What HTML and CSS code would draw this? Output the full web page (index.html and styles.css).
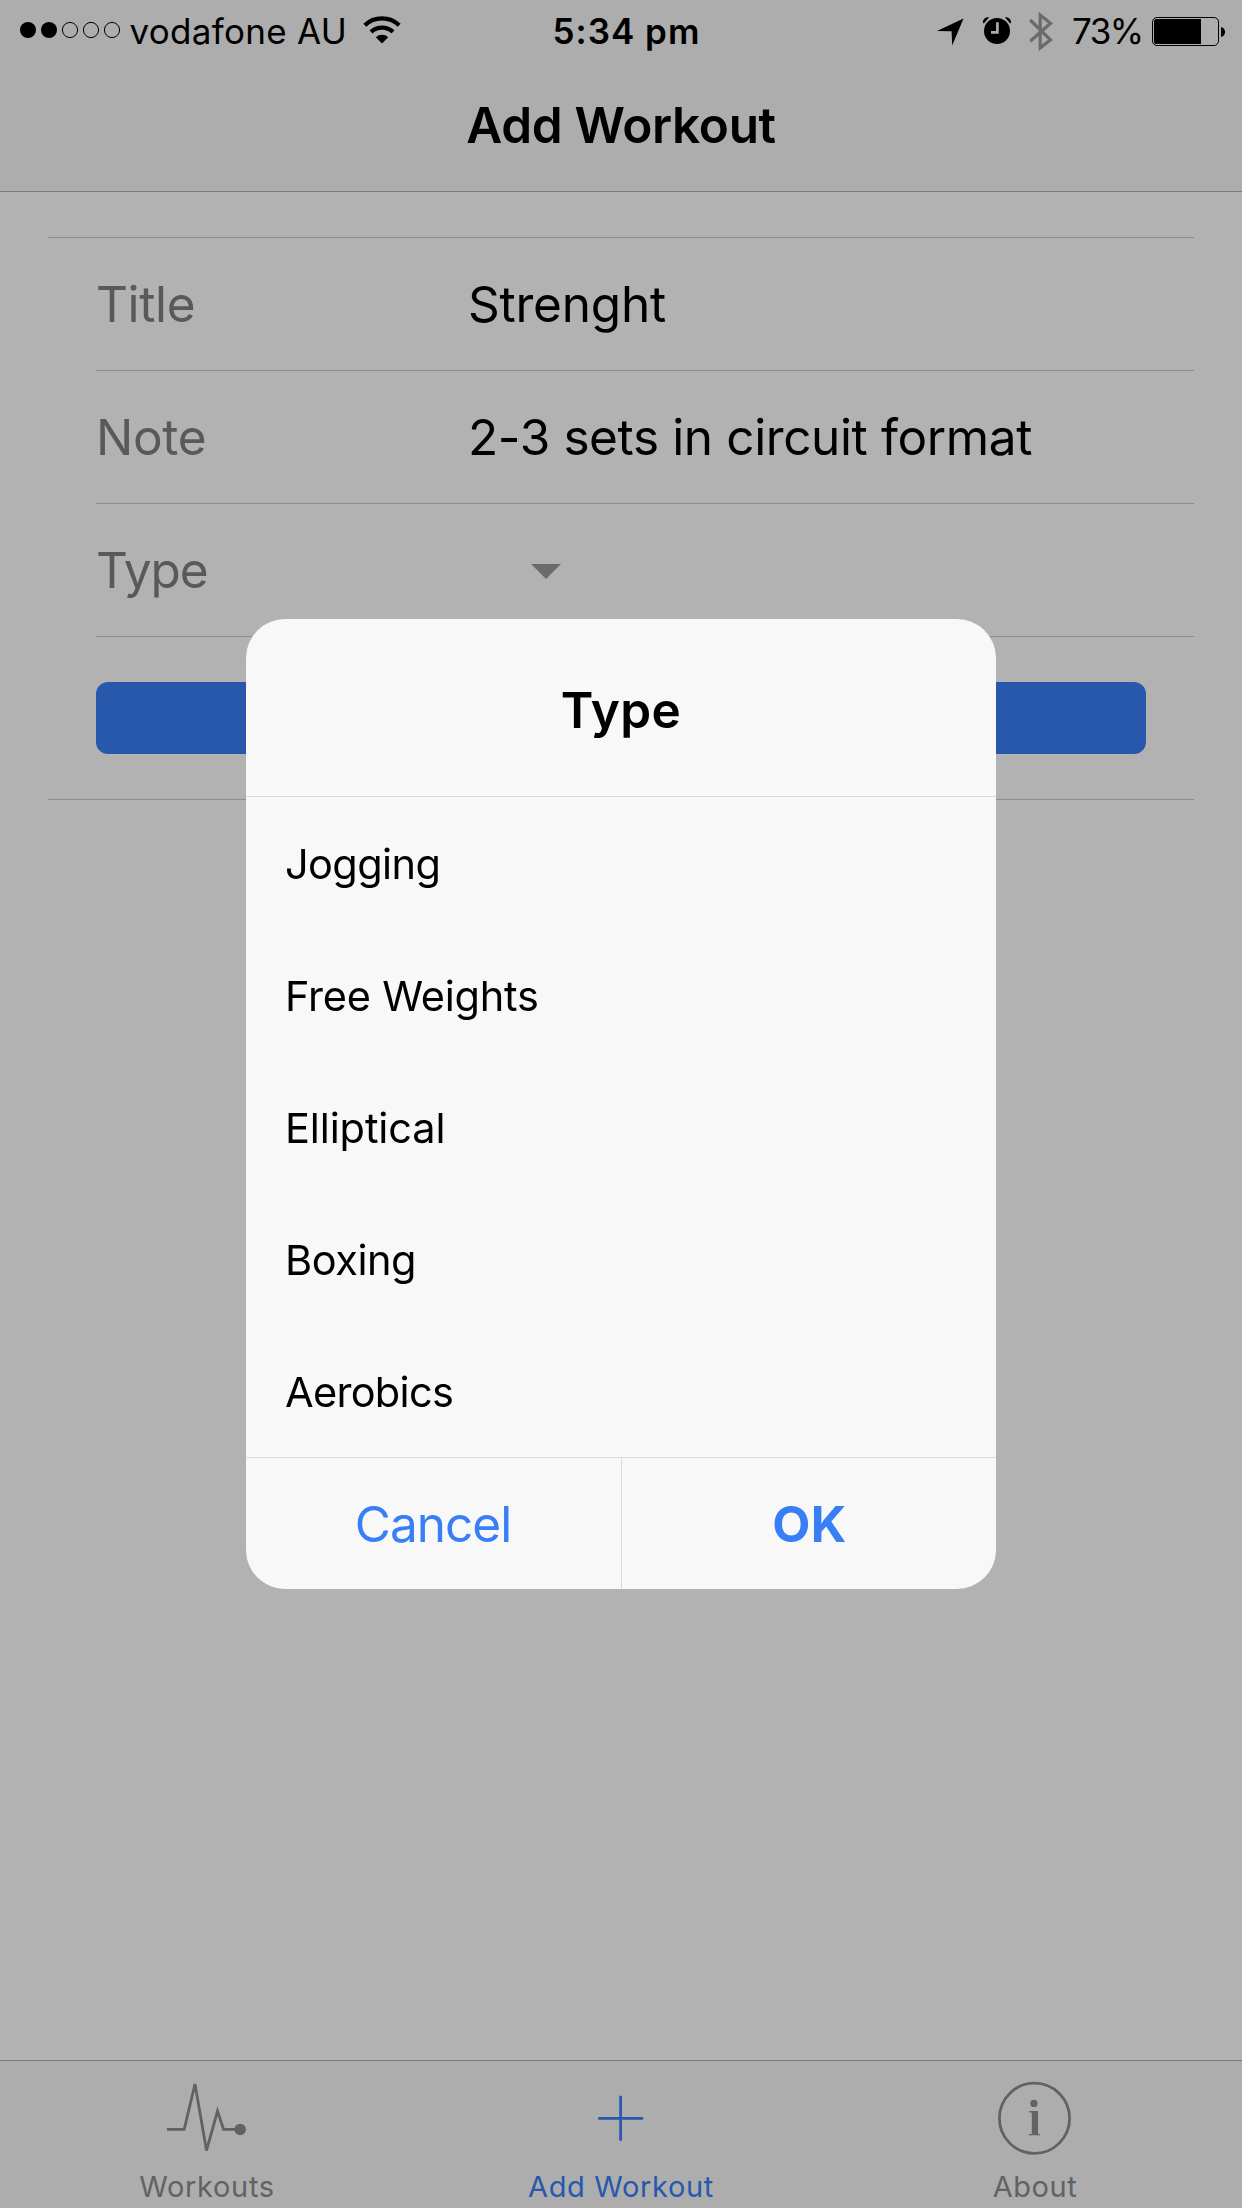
FILE: index.html
```html
<!DOCTYPE html>
<html lang="en">
<head>
<meta charset="utf-8">
<title>Add Workout</title>
<link rel="stylesheet" href="styles.css">
</head>
<body>
<div class="screen">
  <header class="topbar">
    <div class="status">
      <div class="status-left">
        <svg class="signal" width="106" height="20" viewBox="0 0 106 20">
          <circle cx="9" cy="10" r="8"/><circle cx="30" cy="10" r="8"/>
          <g fill="none" stroke="#000" stroke-width="1"><circle cx="51" cy="10" r="7.6"/><circle cx="72" cy="10" r="7.6"/><circle cx="93" cy="10" r="7.6"/></g>
        </svg>
        <span class="carrier">vodafone AU</span>
        <svg class="wifi" width="40" height="30" viewBox="0 0 40 30">
          <g fill="none" stroke="#000" stroke-width="4.3"><path d="M2.8 10.2A25.2 25.2 0 0 1 37.2 10.2"/><path d="M9 16.9A16.2 16.2 0 0 1 31 16.9"/></g>
          <path d="M13.8 22.2A9 9 0 0 1 26.2 22.2L20 28.4Z"/>
        </svg>
      </div>
      <div class="time">5:34 pm</div>
      <div class="status-right">
        <svg width="30" height="30" viewBox="0 0 30 30"><path d="M1 15 27.5 2.5 16.2 29.5 15.6 15.3Z"/></svg>
        <svg class="alarm" width="32" height="30" viewBox="0 0 32 30">
          <circle cx="16" cy="16" r="13"/>
          <path d="M2 7.8C1.6 4.5 4.5 1.8 8 2.4L2.8 8.4ZM30 7.8C30.4 4.5 27.5 1.8 24 2.4L29.2 8.4Z"/>
          <path d="M16.4 7.2V17.3H10" fill="none" stroke="#adadad" stroke-width="2.7"/>
        </svg>
        <svg class="bluetooth" width="30" height="44" viewBox="0 0 30 44"><path d="M3.2 11 23.5 30.8 13.2 39V6L23.5 14.2 3.2 32.2" fill="none" stroke="#6b6b6b" stroke-width="3.2"/></svg>
        <span class="percent">73%</span>
        <svg class="battery" width="76" height="30" viewBox="0 0 76 30">
          <rect x=".5" y="1.5" width="66" height="28" rx="4.5" fill="none" stroke="#000"/>
          <path d="M4.5 3H49V28H4.5A2.5 2.5 0 0 1 2 25.5V5.5A2.5 2.5 0 0 1 4.5 3Z"/>
          <path d="M69 11Q73 12 73 16T69 21Z"/>
        </svg>
      </div>
    </div>
    <h1 class="title">Add Workout</h1>
  </header>

  <main class="content">
    <form class="form">
      <div class="row"><label class="label">Title</label><span class="value strength">Strenght</span></div>
      <div class="row"><label class="label">Note</label><span class="value">2-3 sets in circuit format</span></div>
      <div class="row"><label class="label type">Type</label><span class="value"><i class="caret"></i></span></div>
      <div class="submit"><button class="button" type="button" aria-label="Add"></button></div>
    </form>
  </main>

  <nav class="tabs">
    <a class="tab">
      <svg width="96" height="86" viewBox="0 0 96 86">
        <path d="M8 53.3H25.2L36 8 47.5 74.5 58.5 35 64.5 53.3H81" fill="none" stroke="currentColor" stroke-width="2.8"/>
        <circle cx="81.2" cy="53.4" r="5.7" fill="currentColor"/>
      </svg>
      <span class="tab-label">Workouts</span>
    </a>
    <a class="tab active">
      <svg width="96" height="86" viewBox="0 0 96 86"><path d="M25.2 42.3H70.2M47.6 19.7V64.7" stroke="currentColor" stroke-width="2.7"/></svg>
      <span class="tab-label">Add Workout</span>
    </a>
    <a class="tab">
      <svg width="96" height="86" viewBox="0 0 96 86">
        <circle cx="47.5" cy="42.3" r="35.1" fill="none" stroke="currentColor" stroke-width="2.8"/>
        <circle cx="46.9" cy="27.4" r="3.6" fill="currentColor"/>
        <path d="M42.2 35.7H48.5M42 58.6H53.2" stroke="currentColor" stroke-width="1.4"/>
        <rect x="44.8" y="35" width="6.2" height="24" fill="currentColor"/>
      </svg>
      <span class="tab-label about">About</span>
    </a>
  </nav>
</div>

<div class="overlay">
  <section class="dialog">
    <h2 class="dialog-title">Type</h2>
    <ul class="options">
      <li class="option jogging">Jogging</li>
      <li class="option weights">Free Weights</li>
      <li class="option elliptical">Elliptical</li>
      <li class="option boxing">Boxing</li>
      <li class="option aerobics">Aerobics</li>
    </ul>
    <div class="actions">
      <button class="action cancel" type="button">Cancel</button>
      <button class="action ok" type="button">OK</button>
    </div>
  </section>
</div>
</body>
</html>
```
FILE: styles.css
```css
* { box-sizing: border-box; }
body {
  margin: 0;
  background: #b2b2b2;
  color: #000;
  font-family: Inter, "Liberation Sans", sans-serif;
}
h1, h2, ul { margin: 0; padding: 0; }
svg { display: block; flex: none; }
button { border: 0; padding: 0; background: none; font: inherit; }

.screen {
  display: flex;
  flex-direction: column;
  width: 1242px;
  height: 2208px;
  background: #b2b2b2;
}

/* Status bar and page title */
.topbar {
  height: 192px;
  background: #adadad;
  border-bottom: 1px solid #7b7b7b;
}
.status {
  display: grid;
  grid-template-columns: 533.5px 358.5px 1fr;
  height: 62px;
  padding-left: 19px;
  font-size: 35px;
  line-height: 62px;
  white-space: nowrap;
}
.status-left, .status-right { display: flex; align-items: center; }
.signal { margin-right: 4.5px; margin-top: -2px; }
.carrier { letter-spacing: .3px; }
.wifi { margin-left: 15px; margin-top: -3px; }
.time { font-weight: 600; letter-spacing: 1.01px; }
.status-right { padding-left: 25px; }
.alarm { margin-left: 15px; margin-top: -2px; }
.bluetooth { margin-left: 14px; }
.percent { margin-left: 15px; width: 80px; letter-spacing: -1.5px; }
.title {
  height: 129px;
  font-size: 49.5px;
  font-weight: 600;
  line-height: 126px;
  letter-spacing: -.32px;
  text-align: center;
}

/* Form */
.content { flex: 1; padding: 45px 48px 0; }
.form {
  border-top: 1px solid #8c8c8c;
  border-bottom: 1px solid #8c8c8c;
  padding-left: 48px;
}
.row {
  display: flex;
  height: 133px;
  border-bottom: 1px solid #8c8c8c;
  font-size: 49.5px;
  line-height: 132px;
  white-space: nowrap;
}
.label { width: 372px; color: #595959; letter-spacing: -.35px; }
.label.type { letter-spacing: -1.1px; }
.value { display: flex; align-items: center; letter-spacing: -.38px; }
.value.strength { letter-spacing: -.22px; }
.caret {
  margin-left: 63px;
  border: 15px solid transparent;
  border-top-color: #6b6b6b;
  border-bottom: 0;
  margin-top: 3px;
}
.submit { height: 162px; padding: 45px 48px 0 0; }
.button { display: block; width: 100%; height: 72px; border-radius: 12px; background: #2758ac; }

/* Tab bar */
.tabs {
  display: grid;
  grid-template-columns: repeat(3, 1fr);
  height: 148px;
  background: #adadad;
  border-top: 1px solid #7b7b7b;
}
.tab {
  display: flex;
  flex-direction: column;
  align-items: center;
  padding-top: 15px;
  color: #626262;
}
.tab.active { color: #2758ac; }
.tab-label { font-size: 29px; line-height: 50px; letter-spacing: .65px; }
.tab-label.about { letter-spacing: .55px; }

/* Type picker */
.overlay {
  position: fixed;
  inset: 0;
  display: flex;
  justify-content: center;
  align-items: center;
}
.dialog {
  width: 750px;
  height: 970px;
  border-radius: 39px;
  overflow: hidden;
  background: #f8f8f8;
}
.dialog-title {
  height: 178px;
  padding-top: 3px;
  border-bottom: 1px solid #dbdbdf;
  font-size: 49.5px;
  font-weight: 600;
  line-height: 177px;
  letter-spacing: .4px;
  text-align: center;
}
.options { height: 660px; list-style: none; }
.option { height: 132px; padding-left: 39px; font-size: 41.5px; line-height: 134px; }
.jogging { letter-spacing: -.6px; }
.weights { letter-spacing: -.22px; }
.elliptical { letter-spacing: -.12px; }
.boxing { letter-spacing: -.46px; }
.aerobics { letter-spacing: -.7px; }
.actions {
  display: grid;
  grid-template-columns: 1fr 1fr;
  height: 132px;
  border-top: 1px solid #dbdbdb;
  font-size: 49.5px;
}
.action { color: #387ef5; line-height: 132px; }
.cancel { padding-right: 1px; letter-spacing: -.95px; }
.ok { border-left: 1px solid #dbdbdb; padding-left: 1px; font-weight: 700; letter-spacing: .36px; }
```
